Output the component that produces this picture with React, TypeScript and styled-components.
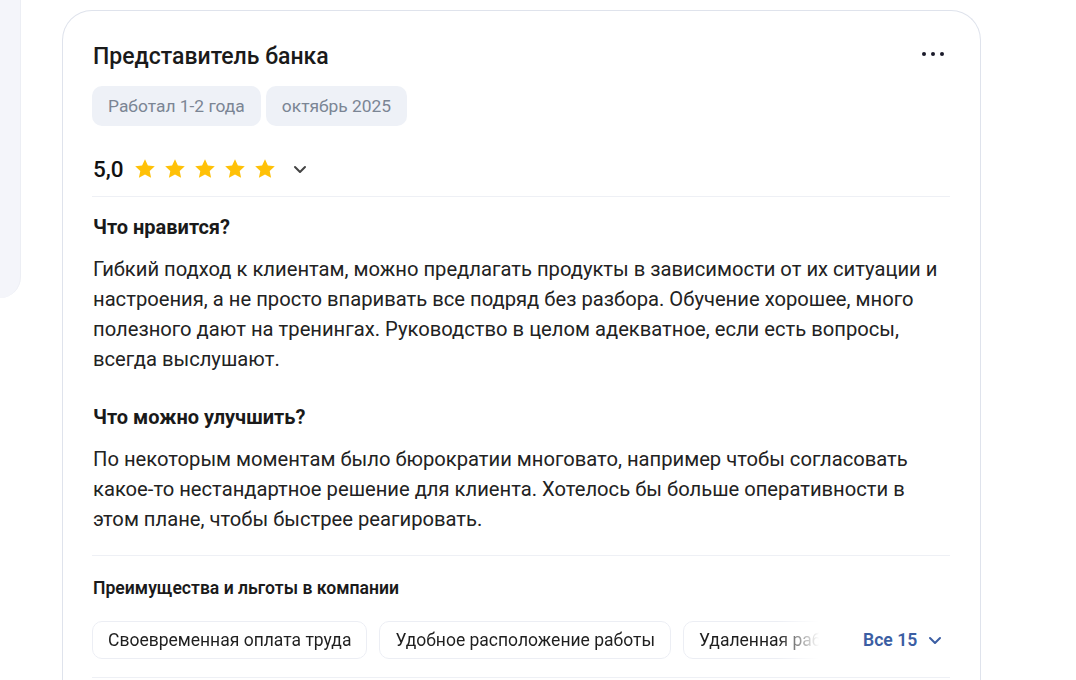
import styled, { createGlobalStyle } from "styled-components";

const GlobalStyle = createGlobalStyle`
  html, body {
    margin: 0;
    padding: 0;
    background: #fff;
    font-family: Roboto, "Noto Sans", "Liberation Sans", sans-serif;
    color: #1f1f1f;
  }
  * { box-sizing: border-box; }
`;

const Page = styled.div`
  display: flex;
  align-items: flex-start;
  height: 680px;
  overflow: hidden;
`;

const SidePanel = styled.div`
  width: 21px;
  height: 298px;
  flex-shrink: 0;
  background: #f4f5fa;
  border-right: 1px solid #eceef4;
  border-bottom-right-radius: 24px;
`;

const Card = styled.article`
  width: 919px;
  margin: 10px 0 0 41px;
  padding: 32px 30px 0 29px;
  border: 1px solid #dfe3ec;
  border-bottom: none;
  border-radius: 30px 30px 0 0;
  background: #fff;
  min-height: 700px;
`;

const Header = styled.div`
  display: flex;
  align-items: flex-start;
  justify-content: space-between;
`;

const Title = styled.h2`
  margin: 0 0 0 1px;
  font-size: 23px;
  line-height: 28px;
  font-weight: 500;
  color: #1a1a1a;
`;

const MoreButton = styled.button`
  display: flex;
  gap: 5px;
  align-items: center;
  background: none;
  border: 0;
  padding: 8px 6px;
  margin-top: 1px;
  cursor: pointer;
`;

const Dot = styled.span`
  width: 4px;
  height: 4px;
  border-radius: 50%;
  background: #1a1a2a;
`;

const Tags = styled.div`
  display: flex;
  gap: 5px;
  margin-top: 15px;
`;

const Tag = styled.span`
  height: 40px;
  display: inline-flex;
  align-items: center;
  padding: 0 16px;
  border-radius: 10px;
  background: #eef1f7;
  color: #7b8594;
  font-size: 17.4px;
`;

const RatingRow = styled.div`
  display: flex;
  align-items: center;
  height: 48px;
  margin-top: 23px;
  padding-bottom: 8px;
  border-bottom: 1px solid #eef0f5;
`;

const Score = styled.span`
  font-size: 22.5px;
  font-weight: 500;
  margin: 0 9px 0 1px;
  color: #111;
`;

const Stars = styled.div`
  display: flex;
  gap: 6px;
`;

const Chevron = styled.button`
  display: flex;
  background: none;
  border: 0;
  padding: 0;
  margin-left: 15px;
  color: #444;
  cursor: pointer;
`;

const Section = styled.section`
  padding-top: 16px;
  & + & {
    padding-top: 29px;
  }
`;

const SectionTitle = styled.h3`
  margin: 0 0 0 1px;
  font-size: 20px;
  line-height: 28px;
  font-weight: 700;
  color: #1a1a1a;
`;

const SectionText = styled.p`
  margin: 13px 0 0 1px;
  font-size: 20.2px;
  line-height: 30px;
  color: #222;
`;

const Benefits = styled.div`
  margin-top: 21px;
  border-top: 1px solid #eef0f5;
  border-bottom: 1px solid #eef0f5;
  padding: 20px 0 18px;
`;

const BenefitsTitle = styled.h4`
  margin: 0 0 0 1px;
  font-size: 17.6px;
  line-height: 24px;
  font-weight: 600;
  color: #1a1a1a;
`;

const BenefitsRow = styled.div`
  display: flex;
  align-items: center;
  margin-top: 21px;
`;

const ChipScroller = styled.div`
  display: flex;
  gap: 12px;
  width: 735px;
  overflow: hidden;
  mask-image: linear-gradient(to right, #000 calc(100% - 50px), transparent calc(100% - 8px));
`;

const Chip = styled.span`
  flex-shrink: 0;
  height: 38px;
  display: inline-flex;
  align-items: center;
  padding: 0 15px;
  border: 1px solid #eceef4;
  border-radius: 10px;
  font-size: 17.5px;
  color: #1f1f1f;
  white-space: nowrap;
`;

const ShowAll = styled.button`
  display: flex;
  align-items: center;
  gap: 10px;
  margin-left: 36px;
  background: none;
  border: 0;
  padding: 0;
  font-family: inherit;
  font-size: 17.6px;
  font-weight: 600;
  color: #3b5ea3;
  cursor: pointer;
  white-space: nowrap;
`;

function Star() {
  return (
    <svg width="24" height="24" viewBox="0 0 24 24">
      <path
        d="M12 2.2l2.9 6.3 6.9.8-5.1 4.7 1.4 6.8L12 17.4l-6.1 3.4 1.4-6.8-5.1-4.7 6.9-.8z"
        fill="#ffc107"
      />
    </svg>
  );
}

function ChevronIcon() {
  return (
    <svg width="16" height="16" viewBox="0 0 16 16" fill="none">
      <path
        d="M3 6l5 5 5-5"
        stroke="currentColor"
        strokeWidth="2"
        strokeLinecap="round"
        strokeLinejoin="round"
      />
    </svg>
  );
}

const sections = [
  {
    title: "Что нравится?",
    text: "Гибкий подход к клиентам, можно предлагать продукты в зависимости от их ситуации и настроения, а не просто впаривать все подряд без разбора. Обучение хорошее, много полезного дают на тренингах. Руководство в целом адекватное, если есть вопросы, всегда выслушают.",
  },
  {
    title: "Что можно улучшить?",
    text: "По некоторым моментам было бюрократии многовато, например чтобы согласовать какое-то нестандартное решение для клиента. Хотелось бы больше оперативности в этом плане, чтобы быстрее реагировать.",
  },
];

const benefits = [
  "Своевременная оплата труда",
  "Удобное расположение работы",
  "Удаленная работа",
  "ДМС",
];

export default function App() {
  return (
    <>
      <GlobalStyle />
      <Page>
        <SidePanel />
        <Card>
          <Header>
            <Title>Представитель банка</Title>
            <MoreButton aria-label="Ещё">
              <Dot />
              <Dot />
              <Dot />
            </MoreButton>
          </Header>
          <Tags>
            <Tag>Работал 1-2 года</Tag>
            <Tag>октябрь 2025</Tag>
          </Tags>
          <RatingRow>
            <Score>5,0</Score>
            <Stars>
              {[0, 1, 2, 3, 4].map((i) => (
                <Star key={i} />
              ))}
            </Stars>
            <Chevron aria-label="Подробнее">
              <ChevronIcon />
            </Chevron>
          </RatingRow>
          {sections.map((s) => (
            <Section key={s.title}>
              <SectionTitle>{s.title}</SectionTitle>
              <SectionText>{s.text}</SectionText>
            </Section>
          ))}
          <Benefits>
            <BenefitsTitle>Преимущества и льготы в компании</BenefitsTitle>
            <BenefitsRow>
              <ChipScroller>
                {benefits.map((b) => (
                  <Chip key={b}>{b}</Chip>
                ))}
              </ChipScroller>
              <ShowAll>
                Все 15
                <ChevronIcon />
              </ShowAll>
            </BenefitsRow>
          </Benefits>
        </Card>
      </Page>
    </>
  );
}
